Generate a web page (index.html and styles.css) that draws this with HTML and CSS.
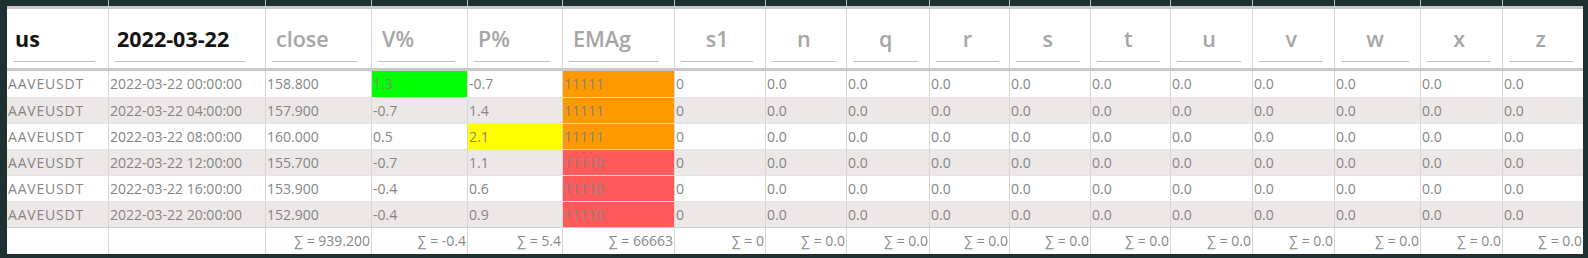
FILE: index.html
```html
<!DOCTYPE html>
<html>
<head>
<meta charset="utf-8">
<link rel="stylesheet" href="styles.css">
</head>
<body>
<div class="frame">
  <div class="grid">
    <div class="row cap">
      <div></div><div></div><div></div><div></div><div></div><div></div><div></div><div></div><div></div><div></div><div></div><div></div><div></div><div></div><div></div><div></div><div></div>
    </div>
    <div class="row head">
      <div class="hc"><div class="field val">us</div></div>
      <div class="hc"><div class="field val">2022-03-22</div></div>
      <div class="hc"><div class="field ph">close</div></div>
      <div class="hc"><div class="field ph">V%</div></div>
      <div class="hc"><div class="field ph">P%</div></div>
      <div class="hc"><div class="field ph">EMAg</div></div>
      <div class="hc"><div class="field ph c">s1</div></div>
      <div class="hc"><div class="field ph c">n</div></div>
      <div class="hc"><div class="field ph c">q</div></div>
      <div class="hc"><div class="field ph c">r</div></div>
      <div class="hc"><div class="field ph c">s</div></div>
      <div class="hc"><div class="field ph c">t</div></div>
      <div class="hc"><div class="field ph c">u</div></div>
      <div class="hc"><div class="field ph c">v</div></div>
      <div class="hc"><div class="field ph c">w</div></div>
      <div class="hc"><div class="field ph c">x</div></div>
      <div class="hc"><div class="field ph c">z</div></div>
    </div>

    <div class="row data">
      <div class="sym">AAVEUSDT</div><div>2022-03-22 00:00:00</div><div>158.800</div><div class="green">1.3</div><div>-0.7</div><div class="orange">11111</div><div>0</div><div>0.0</div><div>0.0</div><div>0.0</div><div>0.0</div><div>0.0</div><div>0.0</div><div>0.0</div><div>0.0</div><div>0.0</div><div>0.0</div>
    </div>
    <div class="row data alt">
      <div class="sym">AAVEUSDT</div><div>2022-03-22 04:00:00</div><div>157.900</div><div>-0.7</div><div>1.4</div><div class="orange">11111</div><div>0</div><div>0.0</div><div>0.0</div><div>0.0</div><div>0.0</div><div>0.0</div><div>0.0</div><div>0.0</div><div>0.0</div><div>0.0</div><div>0.0</div>
    </div>
    <div class="row data">
      <div class="sym">AAVEUSDT</div><div>2022-03-22 08:00:00</div><div>160.000</div><div>0.5</div><div class="yellow">2.1</div><div class="orange">11111</div><div>0</div><div>0.0</div><div>0.0</div><div>0.0</div><div>0.0</div><div>0.0</div><div>0.0</div><div>0.0</div><div>0.0</div><div>0.0</div><div>0.0</div>
    </div>
    <div class="row data alt">
      <div class="sym">AAVEUSDT</div><div>2022-03-22 12:00:00</div><div>155.700</div><div>-0.7</div><div>1.1</div><div class="red">11110</div><div>0</div><div>0.0</div><div>0.0</div><div>0.0</div><div>0.0</div><div>0.0</div><div>0.0</div><div>0.0</div><div>0.0</div><div>0.0</div><div>0.0</div>
    </div>
    <div class="row data">
      <div class="sym">AAVEUSDT</div><div>2022-03-22 16:00:00</div><div>153.900</div><div>-0.4</div><div>0.6</div><div class="red">11110</div><div>0</div><div>0.0</div><div>0.0</div><div>0.0</div><div>0.0</div><div>0.0</div><div>0.0</div><div>0.0</div><div>0.0</div><div>0.0</div><div>0.0</div>
    </div>
    <div class="row data alt">
      <div class="sym">AAVEUSDT</div><div>2022-03-22 20:00:00</div><div>152.900</div><div>-0.4</div><div>0.9</div><div class="red">11110</div><div>0</div><div>0.0</div><div>0.0</div><div>0.0</div><div>0.0</div><div>0.0</div><div>0.0</div><div>0.0</div><div>0.0</div><div>0.0</div><div>0.0</div>
    </div>

    <div class="row foot">
      <div></div><div></div><div>∑ = 939.200</div><div>∑ = -0.4</div><div>∑ = 5.4</div><div>∑ = 66663</div><div>∑ = 0</div><div>∑ = 0.0</div><div>∑ = 0.0</div><div>∑ = 0.0</div><div>∑ = 0.0</div><div>∑ = 0.0</div><div>∑ = 0.0</div><div>∑ = 0.0</div><div>∑ = 0.0</div><div>∑ = 0.0</div><div>∑ = 0.0</div>
    </div>
  </div>
</div>
</body>
</html>
```

FILE: styles.css
```css
* { box-sizing: border-box; }

html, body {
  margin: 0;
  padding: 0;
  background: #1e3131;
}

.frame {
  width: 1588px;
  height: 258px;
  background: #1e3131;
  padding: 0 5px 0 7px;
  overflow: hidden;
  font-family: "Open Sans", "Noto Sans", sans-serif;
}

.grid {
  width: 1576px;
}

.row {
  display: grid;
  grid-template-columns: 101px 157px 106px 96px 95px 112px 91px 81px 83px 80px 81px 80px 82px 82px 86px 82px 81px;
}

.row > div {
  border-left: 1px solid #d6d6d6;
  min-width: 0;
  overflow: hidden;
  white-space: nowrap;
}

.row > div:first-child {
  border-left: none;
}

/* top strip over the dark frame */
.cap {
  height: 6px;
}

.cap > div {
  border-left-color: #b9bdbd;
}

/* header */
.head {
  height: 65px;
  background: #ffffff;
  border-top: 3px solid #c9c9c9;
  border-bottom: 3px solid #c9c9c9;
}

.field {
  margin-left: 6px;
  width: calc((100% - 7px) * 0.87);
  height: 53px;
  padding: 6px 0 0 2px;
  border-bottom: 1px solid #c2c2c2;
  display: flex;
  align-items: center;
  font-size: 21.5px;
  font-weight: 700;
}

.field.val {
  color: #141414;
}

.field.ph {
  color: #a6a6a6;
  font-weight: 600;
  padding-left: 4px;
}

.field.c {
  justify-content: center;
  padding-left: 0;
}

/* data rows */
.data {
  height: 26px;
  background: #ffffff;
  border-top: 1px solid #e3e3e3;
  font-size: 14px;
  line-height: 25px;
  color: #858585;
}

.head + .data {
  border-top: none;
  height: 26px;
}

.data > div {
  padding-left: 1px;
}

.data.alt {
  background: #ebe8e7;
}

.data .sym {
  letter-spacing: 0.8px;
}

.green { background: #00ff00; }
.orange { background: #fe9900; }
.yellow { background: #ffff00; }
.red { background: #ff5a5a; }

/* footer */
.foot {
  height: 27px;
  background: #ffffff;
  border-top: 1px solid #cfcfcf;
  font-size: 14px;
  line-height: 26px;
  color: #888888;
}

.foot > div {
  text-align: right;
  padding-right: 1px;
}
```
